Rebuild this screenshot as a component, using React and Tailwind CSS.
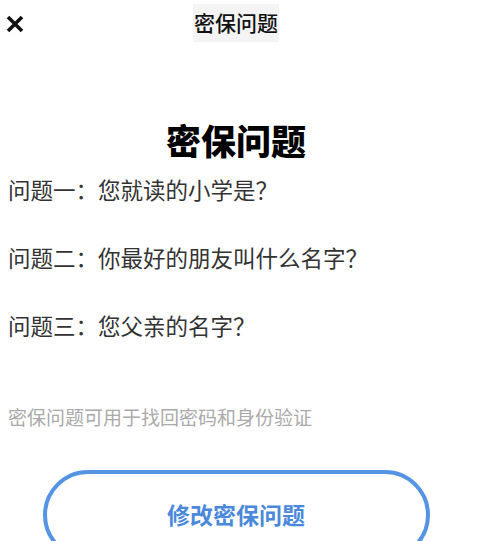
import React from "react";

const questions = [
  "问题一：您就读的小学是？",
  "问题二：你最好的朋友叫什么名字？",
  "问题三：您父亲的名字？",
];

const font = { fontFamily: '"Noto Sans CJK SC", "Noto Sans", sans-serif' };

export default function App() {
  return (
    <div className="h-screen bg-white overflow-hidden" style={font}>
      <div className="w-[472px]">
        {/* header */}
        <div className="relative h-[46px] flex items-center justify-center">
          <button className="absolute left-[5px] top-[14px] w-[20px] h-[20px]">
            <svg viewBox="0 0 20 20" className="w-[20px] h-[20px]">
              <path
                d="M3 3 L17 17 M17 3 L3 17"
                stroke="#111"
                strokeWidth="3.6"
                strokeLinecap="butt"
                fill="none"
              />
            </svg>
          </button>
          <div className="bg-[#f4f4f4] px-[1px] pt-[4px] pb-[6px] text-[21px] leading-[28px] font-medium text-[#111]">
            密保问题
          </div>
        </div>

        {/* big title */}
        <h1 className="mt-[72px] text-center text-[35px] leading-[44px] font-black text-black">
          密保问题
        </h1>

        {/* questions */}
        <div className="mt-[12px] flex flex-col gap-[38px] pl-[8px]">
          {questions.map((q) => (
            <div key={q} className="text-[22.5px] leading-[30px] text-[#333]">
              {q}
            </div>
          ))}
        </div>

        <div className="mt-[65px] pl-[8px] text-[19px] leading-[24px] text-[#aaa]">
          密保问题可用于找回密码和身份验证
        </div>

        <div className="mt-[41px] flex justify-center">
          <button className="w-[387px] h-[90px] shrink-0 rounded-full border-[4px] border-[#5593e4] flex items-start justify-center pt-[25px]">
            <span className="text-[23px] leading-[30px] font-bold text-[#4a88dc]">
              修改密保问题
            </span>
          </button>
        </div>
      </div>
    </div>
  );
}
